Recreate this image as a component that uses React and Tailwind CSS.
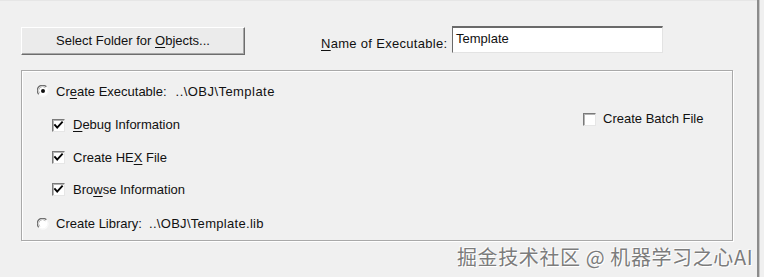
import React from 'react';

const font = { fontFamily: '"Liberation Sans", Arial, sans-serif' };

const Check = ({ checked }) => (
  <span className="relative w-[13px] h-[13px] shrink-0 bg-white border-t border-l border-[#7a7a7a] border-r border-b border-r-[#e6e6e6] border-b-[#e6e6e6] shadow-[inset_1px_1px_0_#b4b4b4]">
    {checked && (
      <svg viewBox="0 0 13 13" className="absolute -top-px -left-px w-[13px] h-[13px]">
        <polyline points="3,6 5.2,8.6 10,3.4" fill="none" stroke="#000" strokeWidth="1.9" strokeLinecap="square" />
      </svg>
    )}
  </span>
);

const Radio = ({ checked }) => (
  <svg viewBox="0 0 12 12" className="w-[12px] h-[12px] shrink-0">
    <circle cx="6" cy="6" r="5.5" fill="#fff" />
    <path d="M1.8 9.4 A5 5 0 0 1 9.4 1.8" fill="none" stroke="#6e6e6e" strokeWidth="1.3" />
    <path d="M2.8 8.4 A3.6 3.6 0 0 1 8.4 2.8" fill="none" stroke="#bdbdbd" strokeWidth="1" />
    <path d="M9.4 1.8 A5 5 0 0 1 1.8 9.4" fill="none" stroke="#f6f6f6" strokeWidth="1" />
    {checked && <circle cx="6" cy="6" r="2" fill="#111" />}
  </svg>
);

const U = ({ children }) => <span className="underline underline-offset-[2px] decoration-1">{children}</span>;

export default function App() {
  return (
    <div className="w-[764px] h-[277px] bg-[#f0f0f0] flex relative overflow-hidden text-[13px] text-[#111]" style={font}>
      <div className="flex-1 flex flex-col pl-[21px] pt-[27px] border-t border-[#e6e6e6]">
        <div className="flex items-start">
          <button className="w-[224px] h-[28px] bg-[#ebebeb] border-t border-l border-white border-r border-b border-r-[#6d6d6d] border-b-[#6d6d6d] shadow-[inset_-1px_-1px_0_#a8a8a8] flex items-center justify-center -mt-px whitespace-pre">
            Select Folder for <U>O</U>bjects...
          </button>
          <span className="ml-[76px] mt-[6px] w-[125px] tracking-[0.3px] whitespace-nowrap"><U>N</U>ame of Executable:</span>
          <div className="ml-[6px] -mt-[2px] w-[211px] h-[27px] bg-white border-t-2 border-l border-[#6a6a6a] border-r border-b border-r-[#e3e3e3] border-b-[#e3e3e3] pl-[3px] pt-[3px] leading-[16px]">
            Template
          </div>
        </div>

        <div className="mt-[15px] w-[712px] h-[171px] border border-[#a9a9a9] shadow-[inset_1px_1px_0_#fff,1px_1px_0_#fff] flex">
          <div className="flex-1 flex flex-col pt-[4px] pl-[15px]">
            <div className="h-[33px] flex items-center gap-[7px]">
              <Radio checked />
              <span className="whitespace-nowrap">
                Cr<U>e</U>ate Executable:
                <span className="ml-[9px] tracking-[0.45px]">..\OBJ\Template</span>
              </span>
            </div>
            <div className="h-[33px] mt-[1px] flex items-center gap-[8px] pl-[15px]">
              <Check checked />
              <span><U>D</U>ebug Information</span>
            </div>
            <div className="h-[32px] flex items-center gap-[8px] pl-[15px]">
              <Check checked />
              <span>Create HE<U>X</U> File</span>
            </div>
            <div className="h-[32px] flex items-center gap-[8px] pl-[15px]">
              <Check checked />
              <span>Bro<U>w</U>se Information</span>
            </div>
            <div className="h-[33px] mt-[2px] flex items-center gap-[7px]">
              <Radio />
              <span className="whitespace-nowrap">
                Create Library:
                <span className="ml-[7px] tracking-[0.3px]">..\OBJ\Template.lib</span>
              </span>
            </div>
          </div>
          <div className="w-[150px] pt-[40px] pl-px">
            <div className="h-[16px] flex items-center gap-[7px]">
              <Check />
              <span>Create Batch File</span>
            </div>
          </div>
        </div>
      </div>

      <div className="w-[7px] flex">
        <div className="w-[2px] bg-[#8c8c8c]" />
        <div className="w-px bg-[#c8c8c8]" />
      </div>

      <div
        className="absolute left-[457px] top-[245px] text-[20px] leading-[24px] tracking-[0.6px] text-[#7c7c7c] whitespace-nowrap [text-shadow:1px_1px_0_#fff,-1px_-1px_0_#fafafa]"
        style={{ fontFamily: '"Noto Sans CJK SC", "Liberation Sans", sans-serif' }}
      >
        掘金技术社区 @ 机器学习之心AI
      </div>
    </div>
  );
}
